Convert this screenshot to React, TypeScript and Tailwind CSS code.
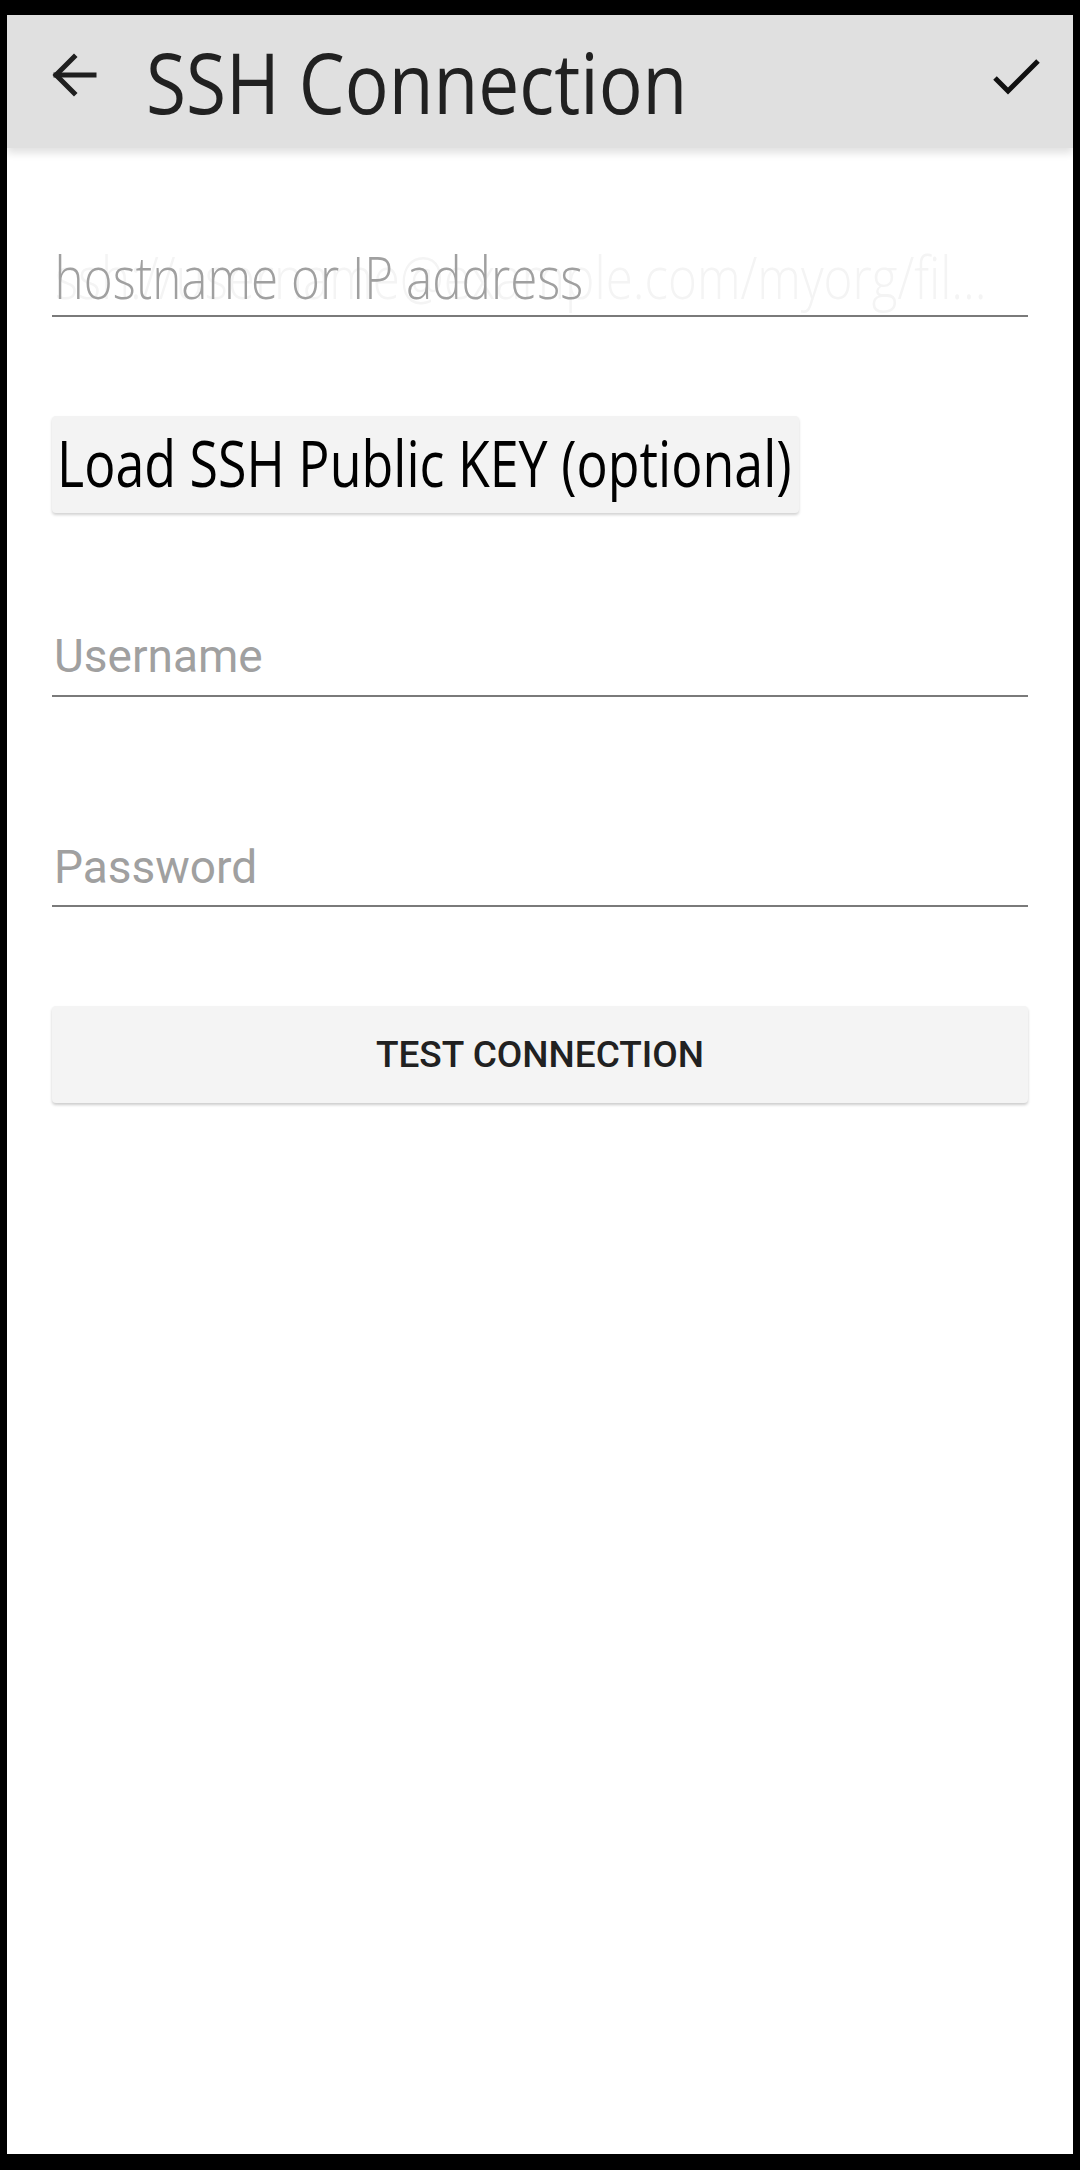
import React from "react";

const openSans = { fontFamily: '"Open Sans", "Liberation Sans", sans-serif' };

export default function App() {
  return (
    <div className="w-[1080px] h-[2170px] bg-black pt-[15px] pb-[16px] px-[7px] flex flex-col">
      <div className="flex-1 bg-white flex flex-col">
        {/* App bar */}
        <div className="relative z-10 h-[133px] bg-[#e0e0e0] flex items-start shadow-[0_5px_8px_rgba(0,0,0,0.12)]">
          <svg className="mt-[36px] ml-[43px] shrink-0" width="48" height="48" viewBox="0 0 48 48" fill="none"
            stroke="#1f1f1f" strokeWidth="5" strokeLinecap="square">
            <path d="M44 24H6" />
            <path d="M24 6L6 24l18 18" />
          </svg>
          <h1 className="mt-[25px] ml-[48px] text-[84px] leading-none text-[#212121] whitespace-nowrap origin-left scale-x-[0.869]" style={openSans}>
            SSH Connection
          </h1>
          <svg className="ml-auto mr-[30px] mt-[37px] shrink-0" width="52" height="52" viewBox="0 0 52 52" fill="none"
            stroke="#111" strokeWidth="5">
            <path d="M4 26l13 13L47 9" />
          </svg>
        </div>

        {/* Form */}
        <div className="flex flex-col px-[45px]">
          <div className="relative mt-[100px] border-b-2 border-[#7a7a7a] pb-[9px]">
            <div className="absolute left-[3px] top-0 text-[58px] leading-none font-light text-[#f4f4f4] whitespace-nowrap origin-left scale-x-[0.851]" style={openSans}>
              ssh://username@example.com/myorg/fil...
            </div>
            <div className="relative pl-[3px] text-[58px] leading-none font-light text-[#a0a0a0] whitespace-nowrap origin-left scale-x-[0.851]" style={openSans}>
              hostname or IP address
            </div>
          </div>

          <button className="mt-[99px] w-[747px] h-[97px] bg-[#f3f3f3] rounded-[4px] shadow-[0_2px_3px_rgba(0,0,0,0.18)] text-left pl-[5px] pb-[3px]">
            <span className="block text-[64px] leading-none text-black whitespace-nowrap origin-left scale-x-[0.812]" style={openSans}>
              Load SSH Public KEY (optional)
            </span>
          </button>

          <div className="mt-[120px] border-b-2 border-[#7a7a7a] pb-[16px] pl-[2px] text-[46px] leading-none text-[#a0a0a0] font-['Roboto',sans-serif]">
            Username
          </div>

          <div className="mt-[147px] border-b-2 border-[#7a7a7a] pb-[15px] pl-[2px] text-[46px] leading-none text-[#a0a0a0] font-['Roboto',sans-serif]">
            Password
          </div>

          <button className="mt-[99px] w-full h-[97px] bg-[#f4f4f4] rounded-[4px] shadow-[0_2px_3px_rgba(0,0,0,0.2)] text-[37px] font-medium text-[#212121] font-['Roboto',sans-serif]">
            TEST CONNECTION
          </button>
        </div>
      </div>
    </div>
  );
}
